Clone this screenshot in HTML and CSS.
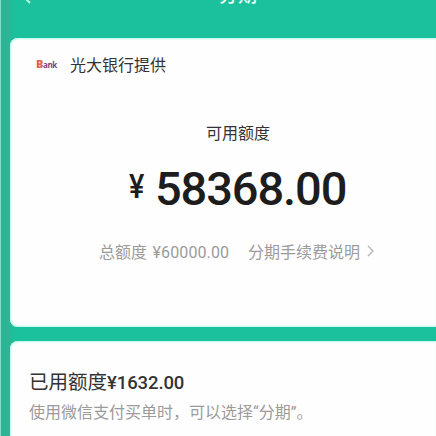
FILE: index.html
```
<!DOCTYPE html>
<html lang="zh-CN">
<head>
<meta charset="utf-8">
<title>分期</title>
<link rel="stylesheet" href="styles.css">
</head>
<body>
<header class="nav">
  <svg class="back" viewBox="0 0 10 18"><path d="M9 1 1 9l8 8"/></svg>
  <h1 class="title">分期</h1>
</header>
<main class="cards">
  <section class="card quota">
    <div class="provider"><span class="logo"><b>B</b>ank</span><span class="bank">光大银行提供</span></div>
    <div class="label">可用额度</div>
    <div class="amount"><span class="yen">¥</span><span class="value">58368.00</span></div>
    <div class="details">
      <span class="total">总额度 <span class="num">¥60000.00</span></span>
      <span class="fees">分期手续费说明</span>
      <svg class="chevron" viewBox="0 0 7 12"><path d="m1 1 5 5-5 5"/></svg>
    </div>
  </section>
  <section class="card used">
    <div class="used-title">已用额度<span class="used-num">¥1632.00</span></div>
    <p class="hint">使用微信支付买单时，可以选择<span class="quote">“</span>分期<span class="quote">”</span>。</p>
  </section>
</main>
</body>
</html>
```
FILE: styles.css
```
* { box-sizing: border-box; }
body {
  margin: 0;
  height: 436px;
  overflow: hidden;
  background: linear-gradient(90deg, #2db596 0, #2db596 9px, #1bc19c 14px);
  border-left: 1px solid #82ddca;
  font-family: "Noto Sans CJK SC", sans-serif;
  color: #333;
  white-space: nowrap;
}
.nav { height: 38px; display: flex; }
.back {
  width: 10px;
  height: 18px;
  margin: -14px 0 0 20px;
  fill: none;
  stroke: #b9f3e4;
  stroke-width: 2;
}
.title {
  margin: -18px 0 0 188px;
  font-size: 19px;
  line-height: 24px;
  font-weight: 500;
  color: #e9fff9;
}
.cards { padding-left: 9px; display: flex; flex-direction: column; gap: 14px; }
.card {
  background: #fefefe;
  border-radius: 8px 0 0 8px;
  box-shadow: inset 2px 0 2px -1px #b5f8ea, inset 0 2px 2px -1px #b5f8ea, inset 0 -2px 2px -1px #b5f8ea;
}
.quota { height: 289px; padding-top: 14px; }
.provider { height: 24px; display: flex; align-items: center; padding-left: 26px; }
.logo {
  width: 34px;
  font: 700 8px/24px "Open Sans", sans-serif;
  letter-spacing: -0.4px;
  color: #78417f;
}
.logo b { font-size: 11px; font-weight: 800; color: #df6650; }
.bank { font-size: 16px; line-height: 24px; }
.label {
  margin: 44px 0 0 196px;
  font-size: 16px;
  line-height: 24px;
}
.amount {
  height: 52px;
  margin: 18px 0 0 119px;
  display: flex;
  font-family: Roboto, sans-serif;
  font-weight: 500;
  color: #1d1d1d;
}
.yen { width: 26px; font-size: 34px; line-height: 48px; transform-origin: left; transform: scaleX(.85); }
.value { font-size: 47px; line-height: 54px; letter-spacing: -1.1px; }
.details {
  display: flex;
  align-items: center;
  height: 24px;
  margin: 25px 0 0 89px;
  font-size: 16px;
  color: #9b9b9b;
}
.total { width: 149px; }
.num { font-family: Roboto, sans-serif; letter-spacing: .1px; margin-left: 2px; }
.fees { width: 119px; }
.chevron { width: 7px; height: 12px; fill: none; stroke: #b5b5b5; stroke-width: 1.3; }
.used { height: 110px; padding: 26px 0 0 19px; }
.used-title { font-size: 19.5px; line-height: 28px; }
.used-num { font-family: Roboto, sans-serif; font-size: 18.5px; font-weight: 500; letter-spacing: -.1px; }
.hint { margin: 2px 0 0; font-size: 16px; line-height: 24px; color: #9b9b9b; }
.quote { font-family: Roboto, sans-serif; }
```
